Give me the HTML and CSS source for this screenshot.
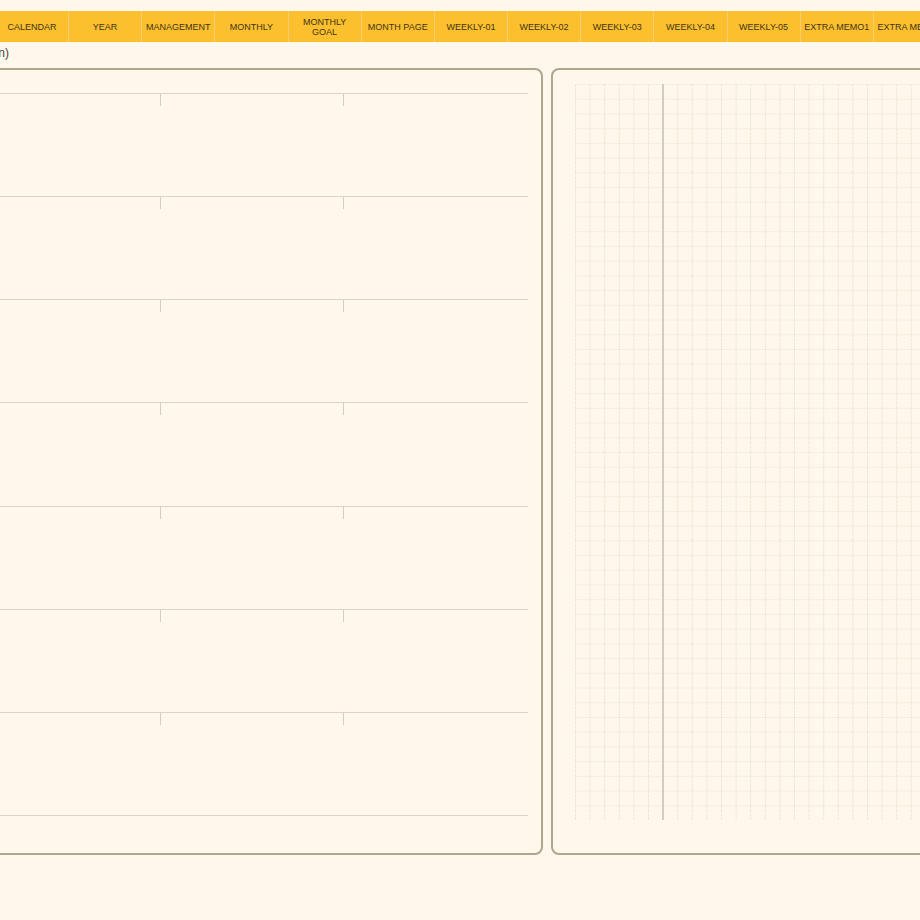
FILE: index.html
```html
<!DOCTYPE html>
<html lang="en">
<head>
<meta charset="utf-8">
<title>Planner</title>
<link rel="stylesheet" href="styles.css">
</head>
<body>
  <nav class="tabs">
    <a class="tab">CALENDAR</a>
    <a class="tab">YEAR</a>
    <a class="tab">MANAGEMENT</a>
    <a class="tab">MONTHLY</a>
    <a class="tab">MONTHLY<br>GOAL</a>
    <a class="tab">MONTH PAGE</a>
    <a class="tab">WEEKLY-01</a>
    <a class="tab">WEEKLY-02</a>
    <a class="tab">WEEKLY-03</a>
    <a class="tab">WEEKLY-04</a>
    <a class="tab">WEEKLY-05</a>
    <a class="tab">EXTRA MEMO1</a>
    <a class="tab">EXTRA MEMO2</a>
  </nav>

  <div class="title"><span>(Plan)</span></div>

  <main class="spread">
    <section class="page page-lines">
      <div class="row"><i></i><i></i><i></i></div>
      <div class="row"><i></i><i></i><i></i></div>
      <div class="row"><i></i><i></i><i></i></div>
      <div class="row"><i></i><i></i><i></i></div>
      <div class="row"><i></i><i></i><i></i></div>
      <div class="row"><i></i><i></i><i></i></div>
      <div class="row"><i></i><i></i><i></i></div>
      <div class="row-end"></div>
    </section>

    <section class="page page-grid">
      <div class="grid">
        <svg class="grid-lines" width="533" height="736" xmlns="http://www.w3.org/2000/svg">
          <defs>
            <pattern id="sq" width="14.6" height="14.72" patternUnits="userSpaceOnUse">
              <line x1="0.5" y1="0" x2="0.5" y2="14.72" stroke="#efe5d7" stroke-width="1" stroke-dasharray="3 1"/>
              <line x1="0" y1="0.5" x2="14.6" y2="0.5" stroke="#f2eadd" stroke-width="1" stroke-dasharray="3 1"/>
            </pattern>
          </defs>
          <rect width="533" height="736" fill="url(#sq)"/>
        </svg>
        <div class="grid-margin"></div>
      </div>
    </section>
  </main>
</body>
</html>
```

FILE: styles.css
```css
html, body {
  margin: 0;
  padding: 0;
}

body {
  background: #fef7eb;
  overflow: hidden;
  width: 920px;
  height: 920px;
  font-family: "Liberation Sans", Arial, sans-serif;
}

/* top tab bar */
.tabs {
  display: flex;
  width: max-content;
  margin-top: 11px;
  margin-left: -4.2px;
  height: 31px;
  background: #fcbf2e;
}

.tab {
  flex: 0 0 73.18px;
  box-sizing: border-box;
  display: flex;
  align-items: center;
  justify-content: center;
  text-align: center;
  font-size: 9px;
  line-height: 10px;
  color: #3f3419;
  border-right: 1px solid #f4cf73;
  white-space: nowrap;
}

/* page heading, clipped at the left edge */
.title {
  width: 9px;
  height: 22px;
  margin-bottom: 4px;
  overflow: hidden;
  display: flex;
  justify-content: flex-end;
  align-items: center;
  white-space: nowrap;
  font-size: 12px;
  color: #4c4740;
}

/* two-page spread */
.spread {
  display: flex;
  gap: 8px;
  margin-left: -38px;
  width: max-content;
}

.page {
  box-sizing: border-box;
  width: 581px;
  height: 787px;
  border: 2px solid #aca78f;
  border-radius: 8px;
}

/* left page: ruled rows split in three columns */
.page-lines {
  padding: 23px 13px 0;
}

.row {
  height: 103.14px;
  box-sizing: border-box;
  border-top: 1.5px solid #d9d3c9;
  display: grid;
  grid-template-columns: repeat(3, 1fr);
  align-items: start;
}

.row i {
  height: 12px;
}

.row i + i {
  border-left: 1.5px solid #d3cdc3;
  margin-left: -1px;
}

.row-end {
  border-top: 1.5px solid #d9d3c9;
}

/* right page: dashed square grid with a margin rule */
.page-grid {
  padding: 14px 22px 0;
}

.grid {
  position: relative;
  height: 736px;
  width: 533px;
}

.grid-lines {
  display: block;
}

.grid-margin {
  position: absolute;
  top: 0;
  bottom: 0;
  left: 87px;
  width: 1.5px;
  background: #d2ccc2;
}
```
